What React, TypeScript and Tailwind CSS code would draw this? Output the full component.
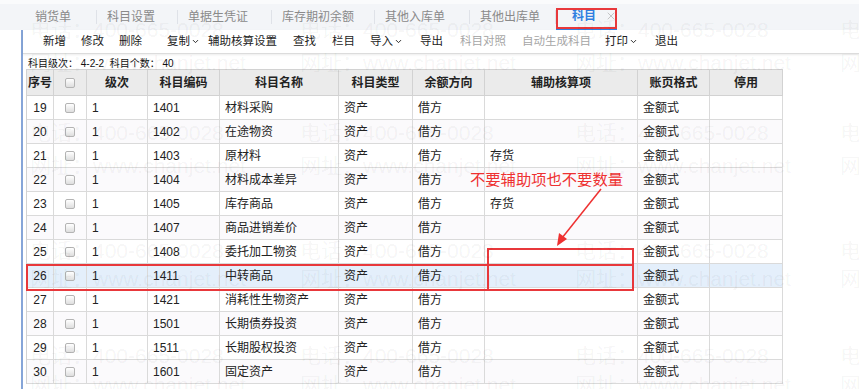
import { ChevronDown, X } from "lucide-react";

const tabs = [
  { label: "销货单", w: "w-[71px]" },
  { label: "科目设置", w: "w-[80px]" },
  { label: "单据生凭证", w: "w-[93px]" },
  { label: "库存期初余额", w: "w-[102px]" },
  { label: "其他入库单", w: "w-[94px]" },
  { label: "其他出库单", w: "w-[85px]" },
];

const tools = [
  { label: "新增", w: "w-[38px]" },
  { label: "修改", w: "w-[38px]" },
  { label: "删除", w: "w-[48px]" },
  { label: "复制", w: "w-[41px]", menu: true },
  { label: "辅助核算设置", w: "w-[85px]" },
  { label: "查找", w: "w-[39px]" },
  { label: "栏目", w: "w-[38px]" },
  { label: "导入", w: "w-[50px]", menu: true },
  { label: "导出", w: "w-[40px]" },
  { label: "科目对照", w: "w-[62px]", disabled: true },
  { label: "自动生成科目", w: "w-[83px]", disabled: true },
  { label: "打印", w: "w-[50px]", menu: true },
  { label: "退出", w: "w-[40px]" },
];

const cols = [
  { title: "序号", w: "w-[27px]" },
  { title: "", w: "w-[33px]" },
  { title: "级次", w: "w-[61px]" },
  { title: "科目编码", w: "w-[72px]" },
  { title: "科目名称", w: "w-[119px]" },
  { title: "科目类型", w: "w-[74px]" },
  { title: "余额方向", w: "w-[72px]" },
  { title: "辅助核算项", w: "w-[153px]" },
  { title: "账页格式", w: "w-[72px]" },
  { title: "停用", w: "w-[73px]" },
];

const rows = [
  { no: 19, code: "1401", name: "材料采购", aux: "" },
  { no: 20, code: "1402", name: "在途物资", aux: "" },
  { no: 21, code: "1403", name: "原材料", aux: "存货" },
  { no: 22, code: "1404", name: "材料成本差异", aux: "" },
  { no: 23, code: "1405", name: "库存商品", aux: "存货" },
  { no: 24, code: "1407", name: "商品进销差价", aux: "" },
  { no: 25, code: "1408", name: "委托加工物资", aux: "" },
  { no: 26, code: "1411", name: "中转商品", aux: "", active: true },
  { no: 27, code: "1421", name: "消耗性生物资产", aux: "" },
  { no: 28, code: "1501", name: "长期债券投资", aux: "" },
  { no: 29, code: "1511", name: "长期股权投资", aux: "" },
  { no: 30, code: "1601", name: "固定资产", aux: "" },
];

const marks = [
  { t: "电话：400-665-0028", y: "top-[17px]" },
  { t: "网址：www.chanjet.net", y: "top-[50px]" },
  { t: "电话：400-665-0028", y: "top-[120px]" },
  { t: "网址：www.chanjet.net", y: "top-[153px]" },
  { t: "电话：400-665-0028", y: "top-[238px]" },
  { t: "网址：www.chanjet.net", y: "top-[266px]" },
  { t: "电话：400-665-0028", y: "top-[343px]" },
  { t: "网址：www.chanjet.net", y: "top-[372px]" },
];

function Checkbox() {
  return (
    <span className="block h-[10px] w-[10px] rounded-[2px] border border-[#b4b4b4] bg-gradient-to-b from-white to-[#dedede]" />
  );
}

export default function App() {
  return (
    <div className="relative h-[389px] w-[859px] overflow-hidden bg-white font-['Liberation_Sans','Noto_Sans_CJK_SC',sans-serif] text-[#222]">
      {/* tab strip */}
      <div className="flex h-[30px] items-center border-t-[4px] border-[#fafbfc] bg-[#f3f5f8] pl-[25px] text-[12px] text-[#8a8a8a]">
        {tabs.map((t) => (
          <div key={t.label} className="flex items-center">
            <div className={`${t.w} pl-[10px]`}>{t.label}</div>
            <span className="h-[14px] w-px bg-[#dfe2e8]" />
          </div>
        ))}
        <div className="flex h-full w-[61px] items-center border-b-2 border-[#2f7fe0] pl-[16px]">
          <span className="font-bold text-[#2f7fe0]">科目</span>
          <X size={12} strokeWidth={1.3} className="ml-[9px] text-[#a8a8a8]" />
        </div>
      </div>

      <div className="ml-[21px] h-[359px] border-l-2 border-[#86a5d8] pl-[3px]">
        {/* toolbar */}
        <div className="-ml-[3px] flex h-[24px] items-center border-b border-[#dcdcdc] pl-[20px] text-[11.5px] text-[#222] shadow-[0_1px_2px_rgba(0,0,0,0.08)]">
          {tools.map((b) => (
            <span
              key={b.label}
              className={`flex shrink-0 items-center ${b.w} ${b.disabled ? "text-[#a5a5a5]" : ""}`}
            >
              {b.label}
              {b.menu && <ChevronDown size={9} strokeWidth={2.5} className="ml-[1px]" />}
            </span>
          ))}
        </div>

        <div className="flex h-[15px] items-end pl-[2px] text-[10px] leading-none text-[#111]">
          科目级次： 4-2-2&nbsp;&nbsp;科目个数： 40
        </div>

        {/* grid */}
        <div className="w-[757px] border-l border-t border-[#d2d2d2] text-[12px]">
          <div className="flex h-[26px] bg-[#ebebeb] font-bold">
            {cols.map((c, i) => (
              <div
                key={i}
                className={`${c.w} flex shrink-0 items-center justify-center border-b border-r border-[#d2d2d2]`}
              >
                {i === 1 ? <Checkbox /> : c.title}
              </div>
            ))}
          </div>
          {rows.map((r) => (
            <div
              key={r.no}
              className={`flex h-[24px] ${r.active ? "bg-[#e4effb]" : r.no % 2 === 0 ? "bg-[#fbfafc]" : "bg-white"}`}
            >
              {[String(r.no), "", "1", r.code, r.name, "资产", "借方", r.aux, "金额式", ""].map((v, i) => (
                <div
                  key={i}
                  className={`${cols[i].w} flex shrink-0 items-center border-b border-r border-[#dadada] ${
                    i < 2 ? "justify-center" : "pl-[5px]"
                  }`}
                >
                  {i === 1 ? <Checkbox /> : v}
                </div>
              ))}
            </div>
          ))}
        </div>
      </div>

      {/* annotations */}
      <div className="pointer-events-none absolute left-[556px] top-[8px] h-[21px] w-[61px] border-2 border-[#e8383b]" />
      <div className="pointer-events-none absolute left-[26px] top-[264px] h-[27px] w-[608px] border-2 border-[#e8383b]" />
      <div className="pointer-events-none absolute left-[487px] top-[248px] h-[43px] w-[147px] border-2 border-[#e8383b]" />
      <div className="pointer-events-none absolute left-[470px] top-[170px] text-[15.3px] leading-[20px] text-[#ee3131]">
        不要辅助项也不要数量
      </div>
      <svg className="pointer-events-none absolute left-0 top-0" width="859" height="389">
        <line x1="601" y1="189" x2="562" y2="238" stroke="#ee3131" strokeWidth="1.5" />
        <polygon points="557,246 559,233 567,239" fill="#ee3131" />
      </svg>

      {/* watermark */}
      {marks.map((m, i) => (
        <div
          key={i}
          className={`pointer-events-none absolute left-0 ${m.y} flex w-[1200px] text-[21px] leading-[26px] text-black/[0.055]`}
        >
          <span className="ml-[30px] w-[270px] shrink-0">{m.t}</span>
          <span className="w-[275px] shrink-0">{m.t}</span>
          <span className="w-[265px] shrink-0">{m.t}</span>
          <span className="shrink-0">{m.t}</span>
        </div>
      ))}
    </div>
  );
}
